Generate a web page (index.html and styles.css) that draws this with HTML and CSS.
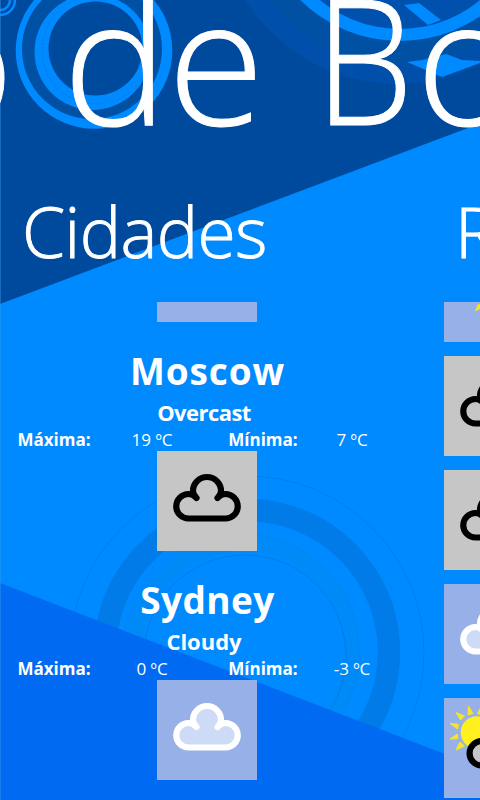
FILE: index.html
```html
<!DOCTYPE html>
<html lang="pt">
<head>
<meta charset="utf-8">
<title>Cidades</title>
<link rel="stylesheet" href="styles.css">
</head>
<body>
<svg width="0" height="0" class="defs">
  <symbol id="cloud" viewBox="0 0 100 100">
    <path d="M31.5 67.5A12.2 12.2 0 0 1 31.5 43Q36 43 39.5 47Q36 43.500 36 40A14 14 0 0 1 64 40Q64 43.500 60.500 47Q64 43 68.500 43A12.200 12.200 0 0 1 68.500 67.500Z" stroke-width="6.200" stroke-linejoin="round"/>
  </symbol>
</svg>
<div class="hub">
  <svg class="backdrop" viewBox="0 0 480 800" width="480" height="800">
    <rect width="480" height="800" fill="#008aff"/>
    <clipPath id="sky"><path d="M0 0H480V123.500L0 304Z"/></clipPath>
    <g clip-path="url(#sky)">
      <rect width="480" height="310" fill="#004a9e"/>
      <circle cx="397" cy="-95" r="179" fill="#004fab"/>
      <circle cx="397" cy="-95" r="160" fill="#0051a3"/>
      <circle cx="400" cy="-101" r="142" fill="#008aff"/>
      <circle cx="400" cy="-96" r="125" fill="#0051ae"/>
      <path d="M404 5L419 3L441 20L428 25Z M407 62L422 60L446 54L462 60L480 61V63L442 77Z" fill="#008aff"/>
      <circle cx="94" cy="50.500" r="78.300" fill="#008aff"/>
      <circle cx="92" cy="49" r="70" fill="#0051a3"/>
      <circle cx="92.500" cy="52" r="58" fill="#008aff"/>
      <circle cx="95.500" cy="48.500" r="47" fill="#004a9e"/>
      <circle cx="96" cy="50" r="54" fill="none" stroke="#0070d0" stroke-width=".7" stroke-dasharray="1.500 2"/>
      <circle r="15" fill="none" stroke="#008aff" stroke-width="2.500"/>
      <circle r="10" fill="none" stroke="#008aff" stroke-width="2.500"/>
    </g>
    <g fill="none">
      <circle cx="247" cy="653" r="177" stroke="#007be8" stroke-width=".8"/>
      <circle cx="247" cy="652" r="142" stroke="#007be8" stroke-width="22.500"/>
      <circle cx="243" cy="652" r="109" stroke="#008af7" stroke-width="16"/>
      <circle cx="241" cy="652" r="118" stroke="#0083ee" stroke-width=".7"/>
      <circle cx="245" cy="656" r="101" stroke="#007be8" stroke-width=".9"/>
    </g>
    <path d="M0 583L480 767.500V800H0Z" fill="#006af3"/>
    <rect width="1" height="800" fill="#3d9be8" opacity=".4"/>
  </svg>
  <h1 class="title"><span class="prev">o</span><span class="de">de</span><span class="b">B</span><span class="o">o</span></h1>
  <div class="sections">
    <section class="cities">
      <h2><span class="heading">Cidades</span></h2>
      <div class="viewport">
        <div class="tile sunny"></div>
        <article class="city">
          <h3 class="moscow">Moscow</h3>
          <p class="condition overcast">Overcast</p>
          <div class="temps"><b>Máxima:</b><span>19 ºC</span><b>Mínima:</b><span>7 ºC</span></div>
          <div class="tile gray"><svg><use href="#cloud"/></svg></div>
        </article>
        <article class="city">
          <h3 class="sydney">Sydney</h3>
          <p class="condition">Cloudy</p>
          <div class="temps"><b>Máxima:</b><span>0 ºC</span><b>Mínima:</b><span>-3 ºC</span></div>
          <div class="tile cloudy"><svg><use href="#cloud"/></svg></div>
        </article>
      </div>
    </section>
    <section class="summary">
      <h2>R</h2>
      <div class="viewport strip">
        <div class="tile sunny"><svg viewBox="0 0 100 100"><circle cx="50" cy="50" r="15" fill="#fff01e"/><path d="M30.500 69.500L34.500 61.500L39 65.500Z" fill="#f5e52d"/></svg></div>
        <div class="tile gray"><svg><use href="#cloud"/></svg></div>
        <div class="tile gray"><svg><use href="#cloud"/></svg></div>
        <div class="tile cloudy"><svg><use href="#cloud"/></svg></div>
        <div class="tile sunny"><svg viewBox="0 0 100 100">
          <circle cx="33" cy="34.500" r="16.300" fill="#fff01e"/>
          <path d="M24.500 8L24 17L29 15.500Z M12 14.500L20.500 18L16.500 22Z M6 25.500L14.300 26.300L13.700 31Z M6 41L13.300 36L14 40.600Z M12 52L16 44L20.500 48Z M37.500 8L33.500 15.500L38 17Z" fill="#f5e52d" stroke="#f5e52d"/>
          <use href="#cloud" x="6.300" width="100" height="100" fill="#c6c6c6" stroke="#000"/>
        </svg></div>
      </div>
    </section>
  </div>
</div>
</body>
</html>
```

FILE: styles.css
```css
* { box-sizing: border-box; }
body { margin: 0; }
.defs { display: block; }
.hub {
  width: 480px;
  height: 800px;
  overflow: hidden;
  position: relative;
  isolation: isolate;
  color: #fff;
  font-family: "Open Sans", "Noto Sans", sans-serif;
}
.backdrop { position: absolute; inset: 0; z-index: -1; }
h1, h2, h3, p { margin: 0; white-space: nowrap; }
.title {
  display: flex;
  height: 195px;
  margin-left: -89px;
  margin-top: -56px;
  font-size: 176px;
  font-weight: 300;
  line-height: 226px;
  -webkit-text-stroke: 1px #fff;
}
.title span { flex: none; }
.title .prev { width: 152px; }
.title .de { width: 251.5px; }
.title .b { width: 101.5px; transform: scaleX(.89); transform-origin: left; }
.sections { display: flex; }
.cities { width: 444px; flex: none; }
.summary { width: 100px; flex: none; }
h2 {
  height: 163px;
  padding-top: 44px;
  padding-left: 22px;
  font-size: 69.5px;
  font-weight: 300;
  line-height: 96px;
  letter-spacing: -.6px;
  -webkit-text-stroke: .9px #fff;
}
.summary h2 { padding-left: 11px; }
.viewport { height: 498px; overflow: hidden; }
.tile { width: 100px; height: 100px; flex: none; }
.tile svg { display: block; width: 100px; height: 100px; }
.cities .tile { margin-left: 157px; }
.cities .viewport > .tile { margin-top: -80px; }
.strip { display: flex; flex-direction: column; gap: 14px; }
.strip .tile:first-child { margin-top: -60px; }
.gray { background: #c6c6c6; fill: #c6c6c6; stroke: #000; }
.cloudy { background: #97b1e8; fill: #cddbf6; stroke: #fff; }
.sunny { background: #97b1e8; }
.city { height: 229px; padding-top: 24px; }
.city h3, .condition { width: 415px; text-align: center; font-weight: 700; }
.city h3 { font-size: 37px; line-height: 50px; height: 51px; letter-spacing: .4px; }
.city .moscow { letter-spacing: .9px; }
.condition { width: 408px; font-size: 22px; line-height: 30px; height: 31px; }
.overcast { letter-spacing: -.55px; }
.temps {
  display: grid;
  grid-template-columns: 108px 88px 134px 44px;
  height: 23px;
  font-size: 17px;
  line-height: 23px;
  text-align: center;
  white-space: nowrap;
}
```
